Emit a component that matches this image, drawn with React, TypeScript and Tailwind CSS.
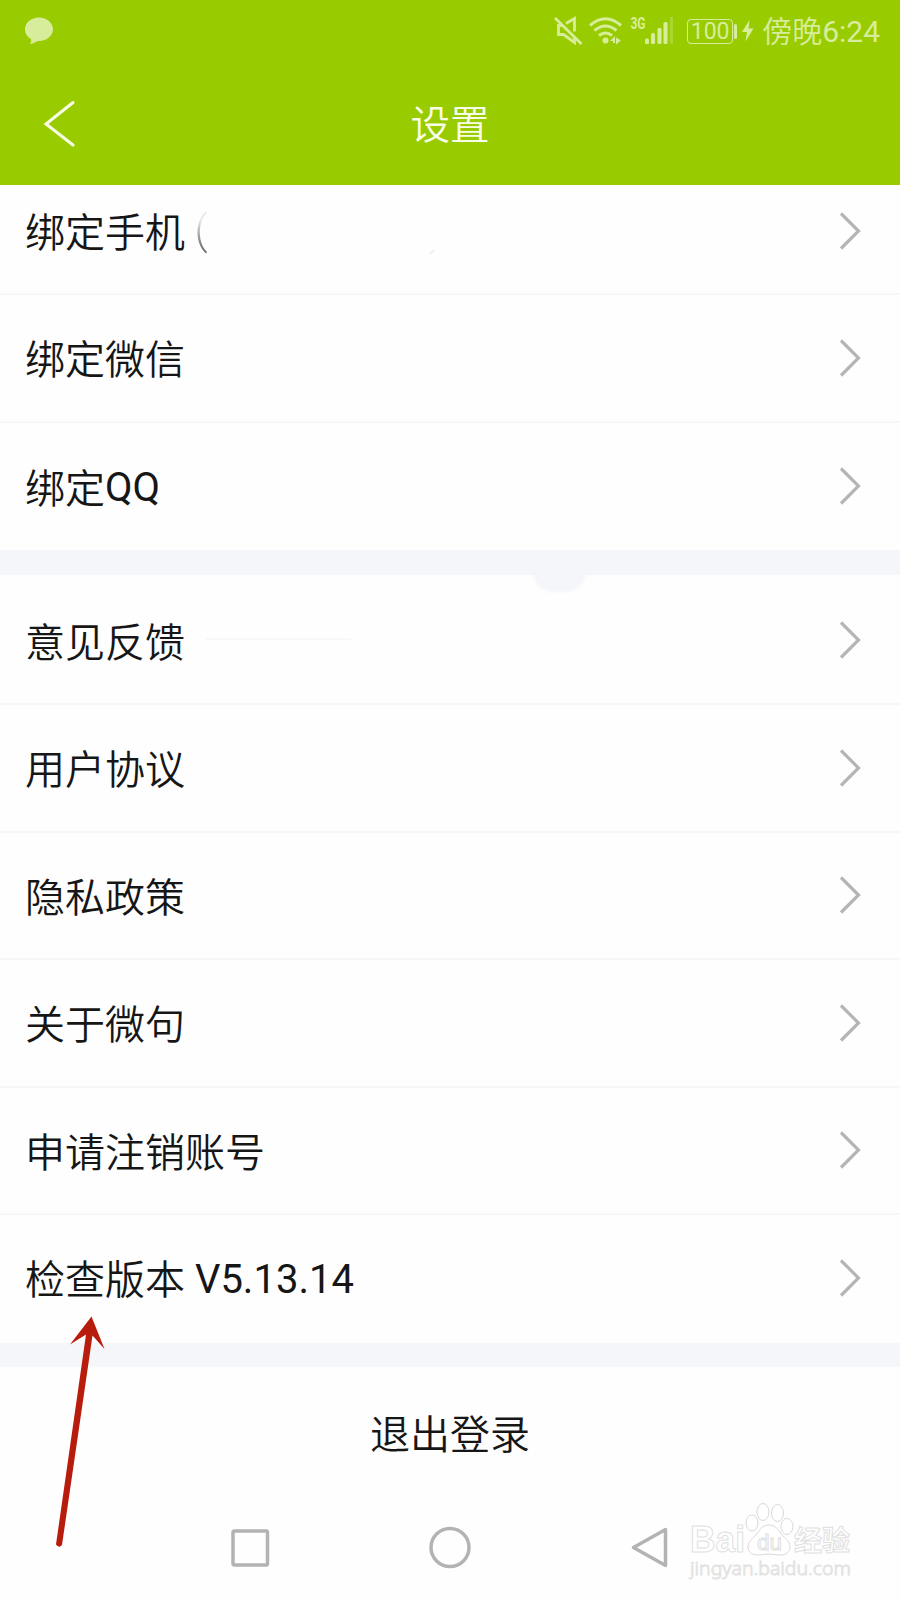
import type { ReactNode } from "react";

interface RowProps {
  label: string;
  latin?: string;
  extra?: ReactNode;
  className?: string;
}

const Chevron = () => (
  <svg width="24" height="42" viewBox="0 0 24 42" fill="none" className="shrink-0">
    <path d="M3 3.500 20.500 21 3 38.500" stroke="#b4b6b5" strokeWidth="3.200" />
  </svg>
);

const Row = ({ label, latin, extra, className = "h-[127.5px] border-b-2" }: RowProps) => (
  <div className={`flex shrink-0 items-center justify-between border-[#f6f7f8] pl-[25px] pr-[38px] ${className}`}>
    <div className="flex items-center whitespace-pre pt-[4px]">
      <span className="pt-[3px]">{label}</span>
      {latin && <span className="font-normal">{latin}</span>}
      {extra}
    </div>
    <Chevron />
  </div>
);

// Half-erased phone number: only the brackets are left
const ErasedPhone = () => (
  <>
    <span className="whitespace-pre bg-linear-to-b from-[#e8e8e8] from-20% to-[#666666] to-90% bg-clip-text pb-1 pr-1 font-[350] text-transparent">
      {" ("}
    </span>
    <svg width="8" height="8" viewBox="0 0 8 8" className="ml-[216px] mt-9">
      <path d="M2 7 6 3" stroke="#f0f0f0" strokeWidth="2" />
    </svg>
  </>
);

const StatusBar = () => (
  <div className="flex h-[62px] items-center pl-[25px] pr-[20px] text-[#d8ed9c]">
    <svg width="28" height="28" viewBox="0 0 28 28" fill="currentColor">
      <path d="M14 .5C6.200.5 0 5.600 0 12.300c0 4.300 2.500 7.800 6.200 9.900.2 1.800-.3 3.300-1.500 4.500 3 .3 5.600-1.300 7.800-2.700h1.500c7.800 0 14-5.100 14-11.700S21.800.5 14 .5z" />
    </svg>
    <svg width="119" height="32" viewBox="0 0 119 32" fill="none" className="ml-auto overflow-visible">
      {/* muted speaker */}
      <g stroke="currentColor" strokeWidth="2.800">
        <path d="M1 3 27.500 29" />
        <path d="M8.500 10.500H4.500v9h5l11 8V22M12 8.500l8.500-5v13" />
      </g>
      {/* wifi */}
      <g stroke="currentColor" strokeWidth="3">
        <path d="M36 10.500q15.500-13.500 31 0M40.500 15.500q11-9 22 0M45 20.500q6.500-5 13 0" />
      </g>
      <circle cx="51.500" cy="25.500" r="3" fill="currentColor" />
      <path d="M56 26l5-5v7h-2v-2zM67 25.500l-5 4v-7z" fill="currentColor" />
      <text x="76.500" y="13.500" fontSize="16" fontWeight="700" fontFamily="Roboto, sans-serif" fill="currentColor" textLength="15" lengthAdjust="spacingAndGlyphs">
        3G
      </text>
      {/* signal */}
      <g fill="currentColor">
        <rect x="91" y="23.500" width="4" height="5.500" rx="1.500" />
        <rect x="97" y="18" width="4" height="11" rx="1.500" />
        <rect x="103.500" y="13" width="4" height="16" rx="1.500" />
        <rect x="109.500" y="7" width="4" height="22" rx="1.500" />
        <rect x="116" y="2" width="3" height="27" opacity=".3" />
      </g>
    </svg>
    <div className="ml-[14px] flex h-[25px] w-[46px] items-center justify-center rounded-[4px] border-[1.5px] border-current font-[Roboto] text-[23px] font-normal leading-none">
      100
    </div>
    <div className="ml-px h-[15px] w-[3px] rounded-xs bg-current" />
    <svg width="12" height="22" viewBox="0 0 12 22" fill="currentColor" className="ml-[5px]">
      <path d="M7.500 0 0 12h5L3.500 21.500 11.500 8.500H6.500z" />
    </svg>
    <span className="ml-[8px] flex pt-[2px] text-[30px] leading-none">
      傍晚<span className="font-normal">6:24</span>
    </span>
  </div>
);

const Header = () => (
  <header className="flex h-[185px] flex-col bg-[#99cc00]">
    <StatusBar />
    <div className="grid h-[123px] grid-cols-[1fr_auto_1fr] items-center">
      <svg width="32" height="48" viewBox="0 0 32 48" fill="none" className="ml-[43px]">
        <path d="M30 2.500 3 24l27 21" stroke="#f8fde8" strokeWidth="3" strokeLinecap="round" />
      </svg>
      <h1 className="pt-[5px] text-[39.5px] text-[#f8fde8]">设置</h1>
    </div>
  </header>
);

const Watermark = () => (
  <svg width="172" height="80" viewBox="0 0 172 80" className="absolute bottom-[18px] right-[42px]" fill="#ffffff" stroke="#e0e0e0" strokeWidth="1">
    <text x="4" y="50" fontSize="36" fontWeight="700" fontFamily="Liberation Sans, sans-serif" textLength="55" lengthAdjust="spacingAndGlyphs">
      Bai
    </text>
    <g stroke="#d9d9d9">
      <ellipse cx="66" cy="21" rx="6" ry="8" />
      <ellipse cx="77" cy="10" rx="6" ry="8.500" />
      <ellipse cx="91.500" cy="11" rx="6" ry="8.500" />
      <ellipse cx="101" cy="24.500" rx="6" ry="8" />
      <path d="M83 23c-8 0-10 7-15 12-4 4-6 6-6 10 0 5 4 8 10 8 4 0 7-1 11-1s7 1 11 1c6 0 10-3 10-8 0-4-2-6-6-10-5-5-7-12-15-12z" />
    </g>
    <text x="71" y="48" fontSize="22" fontFamily="Liberation Sans, sans-serif" textLength="25" lengthAdjust="spacingAndGlyphs">
      du
    </text>
    <text x="108" y="49" fontSize="28" fontWeight="700" fontFamily="Noto Sans CJK SC, sans-serif">
      经验
    </text>
    <text x="4" y="73" fontSize="18" fontFamily="Noto Sans, sans-serif" strokeWidth=".8" textLength="161" lengthAdjust="spacingAndGlyphs">
      jingyan.baidu.com
    </text>
  </svg>
);

const Arrow = () => (
  <svg width="50" height="236" viewBox="0 0 50 236" className="absolute left-[55px] top-[1314px]" fill="#b81c0c">
    <path d="M36.500 2.500 49.500 35 37.500 21.500 7 231Q4 234.500 1 230.500L31 20.500 15 30.500z" />
  </svg>
);

export default function App() {
  return (
    <div className="relative flex h-[1600px] w-[900px] flex-col overflow-hidden bg-[#fefefe] font-[Roboto,'Noto_Sans_CJK_SC',sans-serif] text-[40px] font-[350] leading-none text-[#161616]">
      <Header />

      <section className="flex h-[365px] flex-col">
        <Row label="绑定手机" extra={<ErasedPhone />} className="h-[110px] border-b-2 pb-[17px]" />
        <Row label="绑定微信" />
        <Row label="绑定" latin="QQ" className="h-[127.5px]" />
      </section>

      <div className="relative h-[25px] bg-[#f5f6fa]">
        <div className="absolute left-[533px] top-[22px] h-[20px] w-[53px] rounded-b-[26px] bg-[#f5f6fa] blur-[1px]" />
      </div>

      <section className="flex h-[768px] flex-col">
        <Row
          label="意见反馈"
          extra={<i className="mb-[7px] ml-[21px] h-[2px] w-[145px] bg-[#f7f9f9]" />}
          className="h-[130px] border-b-2 pt-[2px]"
        />
        <Row label="用户协议" />
        <Row label="隐私政策" />
        <Row label="关于微句" />
        <Row label="申请注销账号" />
        <Row label="检查版本" latin=" V5.13.14" className="h-[128px] pb-[3px]" />
      </section>

      <div className="h-6 bg-[#f5f6fa]" />

      <button className="h-[134px] pt-[4px]">退出登录</button>

      <nav className="flex h-[93px] items-center">
        <svg width="900" height="44" viewBox="0 0 900 44" fill="none" stroke="#b3b3b3" strokeWidth="3.500">
          <rect x="233" y="5" width="34.500" height="34" rx="1.500" />
          <circle cx="450" cy="21.500" r="19" />
          <path d="M665.500 3.500v36L633.500 21.500z" strokeLinejoin="round" />
        </svg>
      </nav>

      <Watermark />
      <Arrow />
    </div>
  );
}
